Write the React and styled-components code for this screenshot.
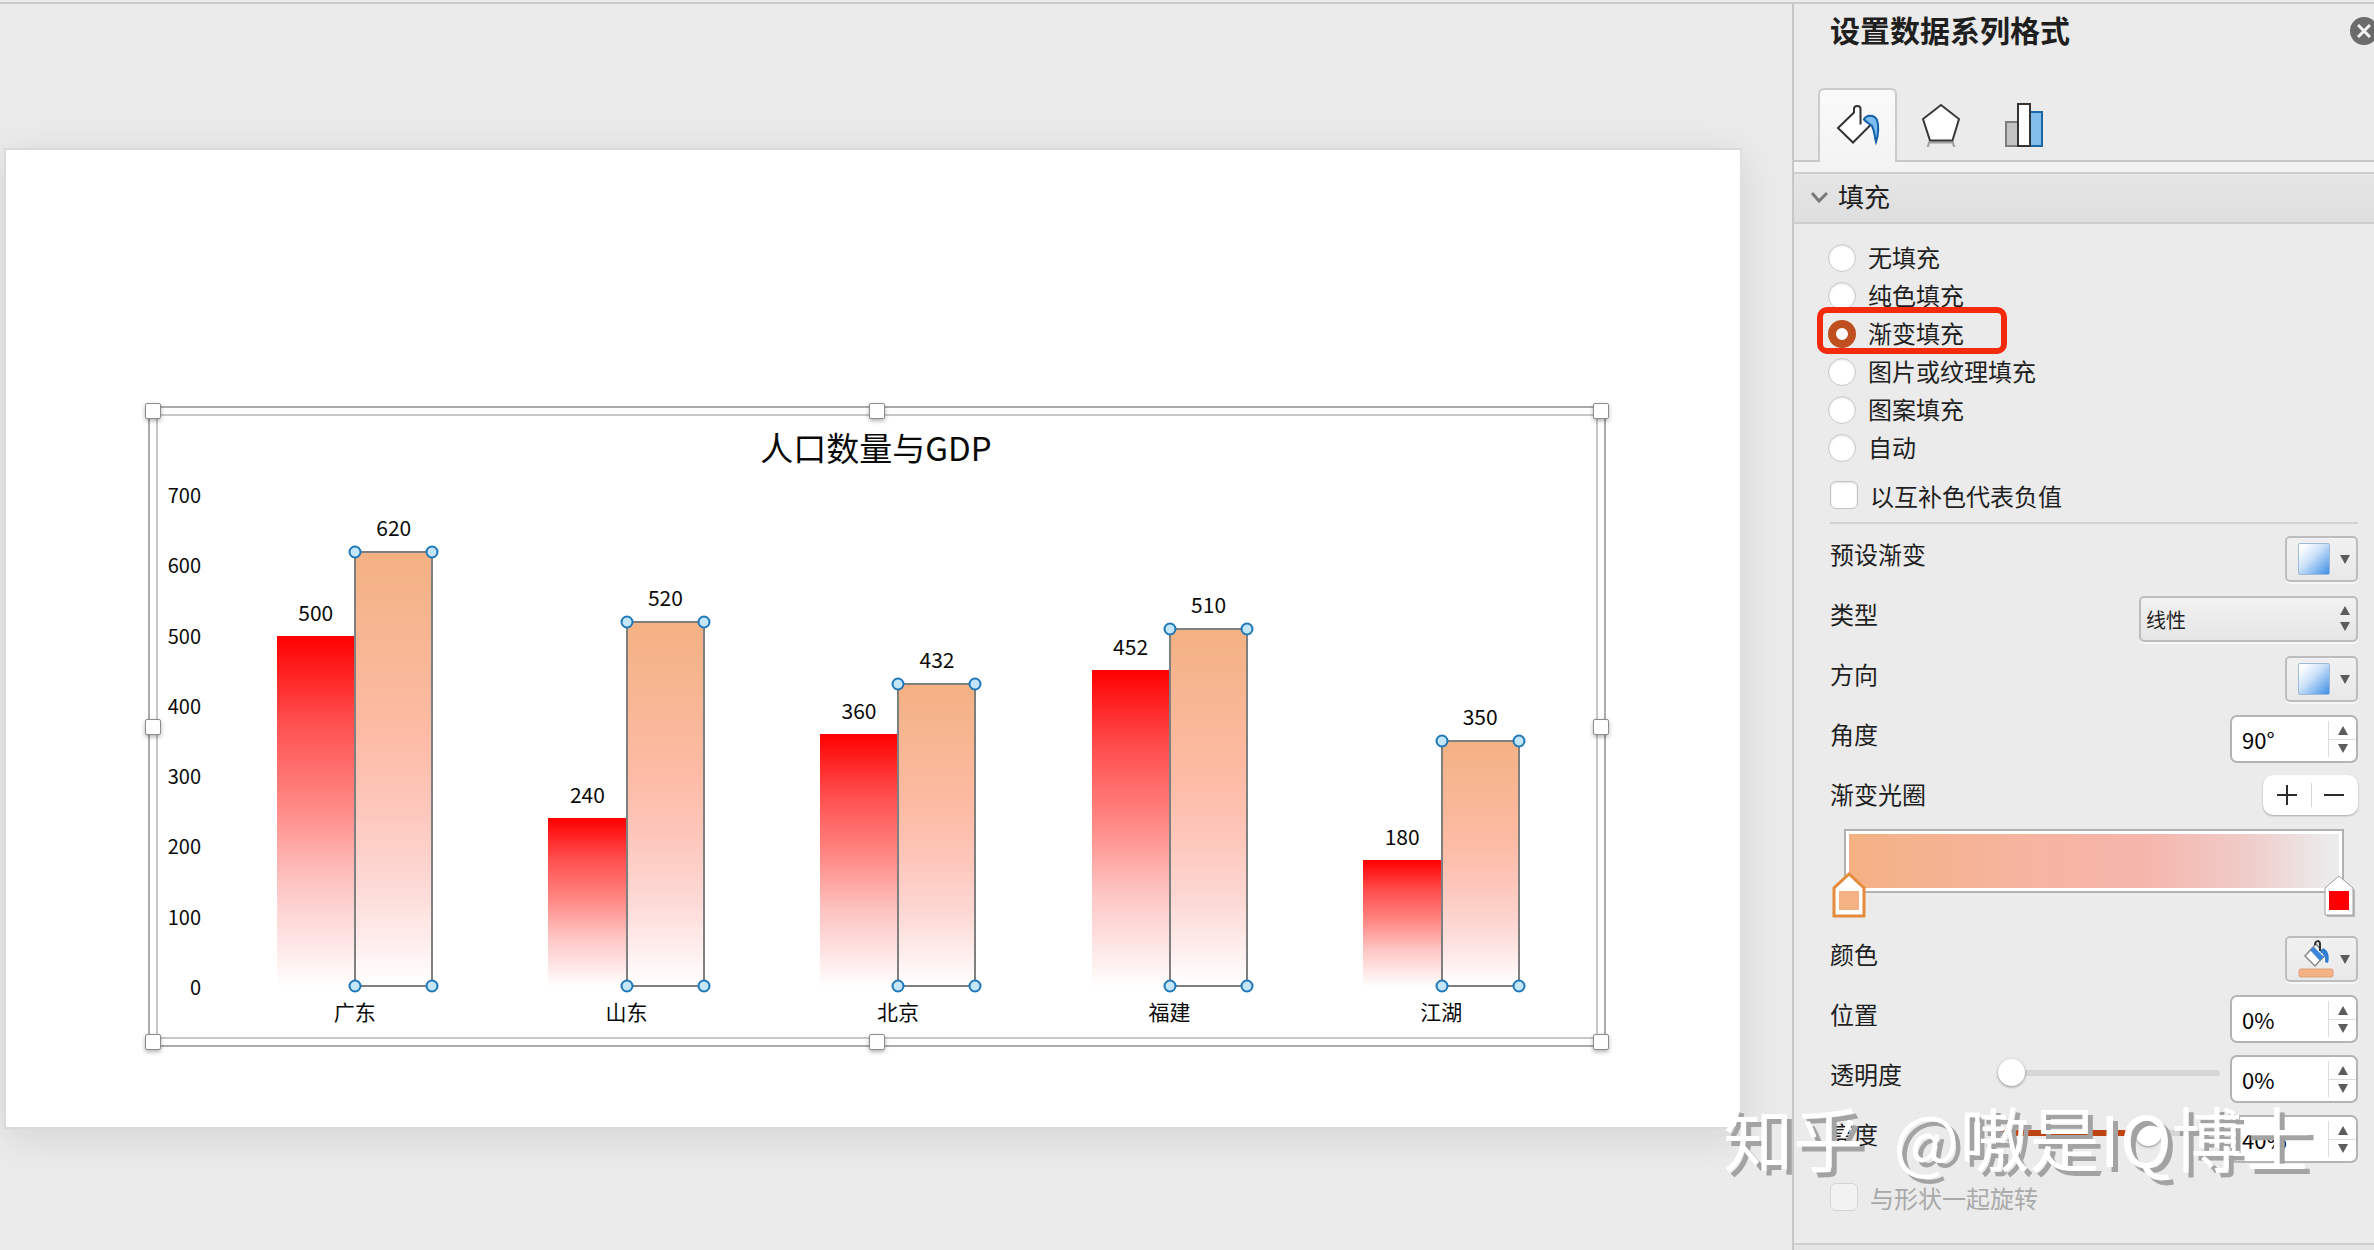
import React, { useState } from "react";
import styled, { createGlobalStyle } from "styled-components";

const UNIT = 0.7;

const GlobalStyle = createGlobalStyle`
  *, *::before, *::after { box-sizing: border-box; }
  body {
    margin: 0;
    background: #ebebeb;
    color: #1f1f1f;
    font-family: "Noto Sans CJK SC", "Noto Sans", sans-serif;
    font-size: 24px;
  }
  button, input, select { font: inherit; color: inherit; margin: 0; }
`;

const Page = styled.div`
  display: flex;
  flex-direction: column;
  min-height: 100vh;
  position: relative;
  overflow: hidden;
`;

const TopRule = styled.div`
  height: 4px;
  border-bottom: 2px solid #cacaca;
`;

const Workspace = styled.div`
  display: flex;
  flex: 1;
`;

const Stage = styled.main`
  flex: 1;
  min-width: 0;
  padding: 144px 50px 0 4px;
  background: #ebebeb;
`;

const Slide = styled.section`
  border: 2px solid #dadada;
  border-right-color: #e0e0e0;
  background: #fff;
  padding: 256px 134px 80px 142px;
  box-shadow: 0 8px 40px rgba(0, 0, 0, 0.1);
`;

const ChartFrame = styled.figure`
  position: relative;
  margin: 0;
  padding: 6px;
  border: 2px solid #ababab;
`;

const ChartInner = styled.div`
  border: 2px solid #c8c8c8;
  padding: 7px 19px 12px 0;
  color: #0a0a0a;
`;

const FrameHandle = styled.span`
  position: absolute;
  left: ${(p) => p.$x};
  top: ${(p) => p.$y};
  width: 16px;
  height: 16px;
  transform: translate(-50%, -50%);
  border: 1px solid #8c8c8c;
  border-radius: 2px;
  background: #fff;
  box-shadow: 0 2px 4px rgba(0, 0, 0, 0.3);
`;

const HandleLayer = styled.div`
  position: absolute;
  inset: 3px;
`;

const ChartTitle = styled.figcaption`
  font-size: 33px;
  line-height: 48px;
  text-align: center;
  padding-left: 17px;
`;

const ChartBody = styled.div`
  display: flex;
  gap: 18px;
  padding-top: 11px;
`;

const Axis = styled.div`
  display: flex;
  flex-direction: column;
  justify-content: space-between;
  width: 43px;
  height: 518px;
  font-size: 20px;
  line-height: 26px;
  text-align: right;
`;

const Plot = styled.div`
  flex: 1;
  display: grid;
  grid-template-columns: repeat(5, 1fr);
`;

const Category = styled.div`
  display: flex;
  flex-direction: column;
  align-items: center;
  gap: 10px;
  font-size: 21px;
  line-height: 28px;
`;

const BarPair = styled.div`
  display: flex;
  align-items: flex-end;
  height: 505px;
`;

const BarColumn = styled.div`
  width: 78px;
  display: flex;
  flex-direction: column;
  align-items: center;
  gap: 10px;
  font-size: 21px;
  line-height: 28px;
`;

const RedBar = styled.div`
  width: 100%;
  background: linear-gradient(#ff0000, #ff5050 25%, #ff8a86 49%, #fdc4c2 70%, #fff 100%);
`;

const OrangeBar = styled.div`
  position: relative;
  width: 79px;
  border: 2px solid #7f7f7f;
  background: linear-gradient(#f4b183, #fdbba5 42%, #fdc6ba 58%, #fdd8d4 76%, #feeeed 90%, #fff 100%);
`;

const Dot = styled.span`
  position: absolute;
  left: ${(p) => p.$x};
  top: ${(p) => p.$y};
  width: 13px;
  height: 13px;
  transform: translate(-50%, -50%);
  border: 2px solid #1f77b8;
  border-radius: 50%;
  background: #c4e6fa;
`;

const DotLayer = styled.div`
  position: absolute;
  inset: -1px;
`;

const Panel = styled.aside`
  width: 582px;
  display: flex;
  flex-direction: column;
  border-left: 2px solid #c8c8c8;
  background: #ebebeb;
`;

const PanelHeader = styled.header`
  display: flex;
  justify-content: space-between;
  align-items: center;
  height: 54px;
  padding-left: 36px;
  overflow: hidden;
`;

const PanelTitle = styled.h1`
  margin: 0;
  padding-bottom: 4px;
  font-size: 30px;
  line-height: 50px;
  font-weight: 700;
`;

const CloseButton = styled.button`
  width: 28px;
  height: 28px;
  margin-right: -4px;
  padding: 0;
  border: 0;
  border-radius: 50%;
  background: #6b6b6b;
  display: grid;
  place-items: center;
`;

const TabList = styled.div`
  display: flex;
  gap: 4px;
  height: 74px;
  margin-top: 30px;
  padding-left: 24px;
  border-bottom: 2px solid #c8c8c8;
`;

const Tab = styled.button`
  width: 79px;
  height: 74px;
  padding: 0 0 2px;
  display: grid;
  place-items: center;
  border: 2px solid ${(p) => (p.$active ? "#cbcbcb" : "transparent")};
  border-bottom: 0;
  border-radius: 6px 6px 0 0;
  background: ${(p) => (p.$active ? "linear-gradient(#fafafa, #f3f3f3)" : "transparent")};
`;

const SectionHeader = styled.button`
  display: flex;
  align-items: center;
  gap: 10px;
  height: 52px;
  margin-top: 10px;
  padding: 0 17px 2px;
  border: 0;
  border-top: 2px solid #cdcdcd;
  border-bottom: 2px solid #cdcdcd;
  background: linear-gradient(#e6e6e6, #dedede);
  box-shadow: 0 -10px 0 #f3f3f3;
  font-size: 26px;
  text-align: left;
`;

const SectionName = styled.span`
  padding-bottom: 3px;
`;

const FillForm = styled.form`
  padding: 15px 16px 0 36px;
`;

const RadioGroup = styled.fieldset`
  margin: 0;
  padding: 0;
  border: 0;
`;

const Choice = styled.label`
  position: relative;
  display: flex;
  align-items: center;
  width: max-content;
  height: 38px;
  gap: 12px;
  margin-left: -2px;
`;

const ChoiceText = styled.span`
  padding-bottom: 3px;
`;

const Radio = styled.input`
  appearance: none;
  width: 28px;
  height: 28px;
  border: 1px solid #c9c9c9;
  border-radius: 50%;
  background: #fff;
  box-shadow: inset 0 1px 2px rgba(0, 0, 0, 0.12);
  &:checked {
    border: 8px solid #c05020;
    box-shadow: none;
  }
`;

const Highlight = styled.span`
  position: absolute;
  inset: -8px -43px -1px -11px;
  border: 6px solid #f42a0c;
  border-radius: 10px;
  pointer-events: none;
`;

const CheckRow = styled.label`
  display: flex;
  align-items: center;
  gap: 12px;
  height: 40px;
  margin-top: 8px;
  color: ${(p) => (p.$muted ? "#a9a9a9" : "inherit")};
`;

const Checkbox = styled.input`
  appearance: none;
  width: 28px;
  height: 28px;
  border: 1px solid #c4c4c4;
  border-radius: 6px;
  background: #fff;
  box-shadow: inset 0 1px 2px rgba(0, 0, 0, 0.12);
  &:disabled {
    border-color: #d4d4d4;
    background: #f2f2f2;
    box-shadow: none;
  }
`;

const Divider = styled.hr`
  height: 2px;
  margin: 7px 0 5px;
  border: 0;
  background: #d2d2d2;
`;

const Row = styled.div`
  display: flex;
  align-items: center;
  gap: 10px;
  height: 60px;
`;

const RowLabel = styled.label`
  flex: 1;
  padding-bottom: 10px;
  line-height: 36px;
`;

const MenuButton = styled.button`
  display: flex;
  align-items: center;
  justify-content: space-between;
  width: 73px;
  height: 46px;
  padding: 0 6px 0 11px;
  border: 2px solid #bdbdbd;
  border-radius: 5px;
  background: linear-gradient(#f1f1f1, #e9e9e9);
  box-shadow: 0 2px 0 #f8f8f8;
`;

const Swatch = styled.span`
  width: 32px;
  height: 32px;
  border: 1px solid #9fb9d6;
  border-radius: 2px;
  background: linear-gradient(135deg, #ffffff 10%, #c9e0f8 45%, #3f8fe6 100%);
`;

const SelectBox = styled.div`
  display: flex;
  position: relative;
  width: 219px;
`;

const Select = styled.select`
  appearance: none;
  width: 100%;
  height: 46px;
  padding: 0 30px 0 5px;
  border: 2px solid #bdbdbd;
  border-radius: 5px;
  background: linear-gradient(#f2f2f2, #e6e6e6);
  box-shadow: 0 2px 0 #f8f8f8;
  font-size: 20px;
`;

const SelectArrows = styled.span`
  position: absolute;
  right: 8px;
  top: 10px;
  display: grid;
  gap: 7px;
  line-height: 0;
  pointer-events: none;
`;

const SpinBox = styled.div`
  display: flex;
  width: 128px;
  height: 48px;
  border: 2px solid #b4b4b4;
  border-radius: 7px;
  background: #fff;
`;

const SpinInput = styled.input`
  flex: 1;
  min-width: 0;
  padding: 0 0 0 10px;
  border: 0;
  background: transparent;
  color: #000;
  font-size: 22px;
  outline: 0;
`;

const SpinButtons = styled.div`
  display: grid;
  grid-template-rows: 1fr 1fr;
  width: 28px;
  margin: 4px 0;
  border-left: 1px solid #dcdcdc;
`;

const SpinButton = styled.button`
  display: grid;
  place-items: center;
  padding: 0;
  border: 0;
  background: none;
  & + & {
    border-top: 1px solid #dcdcdc;
  }
`;

const StopButtons = styled.div`
  display: flex;
  width: 95px;
  height: 40px;
  margin-bottom: 8px;
  border-radius: 10px;
  background: #fff;
  box-shadow: 0 1px 2px rgba(0, 0, 0, 0.3);
`;

const StopButton = styled.button`
  position: relative;
  flex: 1;
  display: grid;
  place-items: center;
  padding: 0;
  border: 0;
  background: none;
  & + &::before {
    content: "";
    position: absolute;
    left: 0;
    top: 8px;
    bottom: 8px;
    width: 1px;
    background: #d6d6d6;
  }
`;

const GradientEditor = styled.div`
  position: relative;
  height: 100px;
  padding: 0 14px;
`;

const GradientTrack = styled.div`
  height: 64px;
  border: 2px solid #b1b1b1;
  padding: 3px;
  background:
    linear-gradient(90deg, #f4b183, #f6b4a0 36%, #f5b5ab 60%, #f0cac7 80%, #ebebeb 98%) content-box,
    #fff;
`;

const StopMarker = styled.button`
  position: absolute;
  top: 43px;
  ${(p) => (p.$end ? "right: 2px;" : "left: 2px;")}
  width: 34px;
  height: 46px;
  padding: 0;
  border: 0;
  background: none;
`;

const Slider = styled.input`
  appearance: none;
  width: 222px;
  height: 28px;
  margin-bottom: 12px;
  background: none;
  &::-webkit-slider-runnable-track {
    height: 6px;
    border-radius: 3px;
    background: linear-gradient(90deg, #bf4413 ${(p) => p.$fill}%, #d6d6d6 ${(p) => p.$fill}%);
  }
  &::-webkit-slider-thumb {
    appearance: none;
    width: 27px;
    height: 27px;
    margin-top: -11px;
    border: 0;
    border-radius: 50%;
    background: #fff;
    box-shadow: 0 1px 3px rgba(0, 0, 0, 0.4);
  }
`;

const NextSection = styled.div`
  flex: 1;
  min-height: 8px;
  margin-top: 26px;
  border-top: 2px solid #cdcdcd;
  background: #e5e5e5;
`;

const Watermark = styled.div`
  position: absolute;
  right: 62px;
  bottom: 64px;
  display: flex;
  gap: 30px;
  color: #fff;
  font-size: 70px;
  line-height: 100px;
  white-space: nowrap;
  text-shadow: 5px 5px 0 #a3a3a3;
  pointer-events: none;
`;

const data = [
  { name: "广东", a: 500, b: 620 },
  { name: "山东", a: 240, b: 520 },
  { name: "北京", a: 360, b: 432 },
  { name: "福建", a: 452, b: 510 },
  { name: "江湖", a: 180, b: 350 },
];

const ticks = [700, 600, 500, 400, 300, 200, 100, 0];

const fillModes = ["无填充", "纯色填充", "渐变填充", "图片或纹理填充", "图案填充", "自动"];

const corners = [
  ["0%", "0%"],
  ["100%", "0%"],
  ["0%", "100%"],
  ["100%", "100%"],
];

const edges = [
  ["50%", "0%"],
  ["0%", "50%"],
  ["100%", "50%"],
  ["50%", "100%"],
];

function Triangle({ up }) {
  return (
    <svg width="10" height="9" viewBox="0 0 10 9" aria-hidden="true">
      <path d={up ? "M5 0 10 9H0Z" : "M0 0H10L5 9Z"} fill="#5c5c5c" />
    </svg>
  );
}

function BucketIcon() {
  return (
    <svg width="44" height="44" viewBox="0 0 44 44" aria-hidden="true">
      <path
        d="M17.500 9.500 2 25 17 39.500 35 21.500 24 19V5.500C24 1 17.500 1 17.500 5.500Z"
        fill="#fff"
        stroke="none"
      />
      <path
        d="M24.500 21.500V6C24.500 2 18 2 18 6V9.500L2 25 17 39.500 35 21.500"
        fill="none"
        stroke="#333"
        strokeWidth="2"
      />
      <path
        d="M28 16.500C30 12 38 11 41 17 43 22 42.500 32 40 39 38.500 33 38.500 28 36 23 34 21 31 20 28 16.500Z"
        fill="#7dbdf0"
        stroke="#1560a8"
        strokeWidth="2"
      />
    </svg>
  );
}

function PentagonIcon() {
  return (
    <svg width="44" height="44" viewBox="0 0 44 44" aria-hidden="true">
      <path d="M10 38.500Q10 42 8.500 44M34 38.500Q34 42 35.500 44M10 39.500H34" fill="none" stroke="#a0a0a0" strokeWidth="2" />
      <path d="M22 2 40 16 33.500 37.500H11L4 16Z" fill="#fff" stroke="#383838" strokeWidth="2" />
    </svg>
  );
}

function ColumnsIcon() {
  return (
    <svg width="44" height="44" viewBox="0 0 44 44" aria-hidden="true">
      <rect x="4" y="19" width="12" height="24" fill="#c3c3c3" stroke="#7d7d7d" strokeWidth="2" />
      <rect x="28" y="9" width="12" height="34" fill="#83bdec" stroke="#1d66a8" strokeWidth="2" />
      <rect x="16" y="1" width="12" height="42" fill="#fff" stroke="#333" strokeWidth="2" />
    </svg>
  );
}

function ColorIcon() {
  return (
    <svg width="36" height="40" viewBox="0 0 36 40" aria-hidden="true">
      <path d="M18 5 27 16 17 27 7 17Z" fill="#fff" stroke="#8a8a8a" strokeWidth="1.500" />
      <path d="M12 11 22 22 26 18 16 8Z" fill="#3b86d6" />
      <path d="M25 9C30 11 32 17 30 24L27 23C28 19 26 15 22 13Z" fill="#2f7dd1" />
      <path d="M17 6C17 1 22 1 22 5V12" fill="none" stroke="#333" strokeWidth="2" />
      <rect x="1" y="30" width="34" height="8" rx="2" fill="#f4b183" stroke="#dda079" />
    </svg>
  );
}

function StopShape({ color, selected }) {
  return (
    <svg width="34" height="46" viewBox="0 0 34 46" aria-hidden="true">
      {selected ? (
        <path d="M17 2 32 16V44H2V16Z" fill="#fff" stroke="#e68a3c" strokeWidth="3" />
      ) : (
        <>
          <path d="M18 6 33 18V45H5V18Z" fill="#b8b8b8" />
          <path d="M17 4 31 16V43H3V16Z" fill="#fff" stroke="#a0a0a0" strokeWidth="1" />
        </>
      )}
      <rect x="7" y="19" width="20" height="19" fill={color} />
    </svg>
  );
}

function Spin({ id, value, label }) {
  return (
    <SpinBox>
      <SpinInput id={id} aria-label={label} defaultValue={value} />
      <SpinButtons>
        <SpinButton type="button" aria-label={label + " +"}>
          <Triangle up />
        </SpinButton>
        <SpinButton type="button" aria-label={label + " -"}>
          <Triangle />
        </SpinButton>
      </SpinButtons>
    </SpinBox>
  );
}

function Chart() {
  return (
    <ChartFrame>
      <ChartInner>
        <ChartTitle>人口数量与GDP</ChartTitle>
        <ChartBody>
          <Axis>
            {ticks.map((t) => (
              <span key={t}>{t}</span>
            ))}
          </Axis>
          <Plot>
            {data.map((d) => (
              <Category key={d.name}>
                <BarPair>
                  <BarColumn>
                    <span>{d.a}</span>
                    <RedBar style={{ height: d.a * UNIT + 1 }} />
                  </BarColumn>
                  <BarColumn>
                    <span>{d.b}</span>
                    <OrangeBar style={{ height: d.b * UNIT + 2 }}>
                      <DotLayer>
                        {corners.map(([x, y]) => (
                          <Dot key={x + y} $x={x} $y={y} />
                        ))}
                      </DotLayer>
                    </OrangeBar>
                  </BarColumn>
                </BarPair>
                <span>{d.name}</span>
              </Category>
            ))}
          </Plot>
        </ChartBody>
      </ChartInner>
      <HandleLayer>
        {[...corners, ...edges].map(([x, y]) => (
          <FrameHandle key={x + y} $x={x} $y={y} />
        ))}
      </HandleLayer>
    </ChartFrame>
  );
}

export default function App() {
  const [mode, setMode] = useState("渐变填充");
  return (
    <Page>
      <GlobalStyle />
      <TopRule />
      <Workspace>
        <Stage>
          <Slide>
            <Chart />
          </Slide>
        </Stage>
        <Panel>
          <PanelHeader>
            <PanelTitle>设置数据系列格式</PanelTitle>
            <CloseButton type="button" aria-label="关闭">
              <svg width="14" height="14" viewBox="0 0 14 14" aria-hidden="true">
                <path d="M1 1 13 13M13 1 1 13" stroke="#f2f2f2" strokeWidth="3" />
              </svg>
            </CloseButton>
          </PanelHeader>
          <TabList role="tablist">
            <Tab type="button" role="tab" aria-selected="true" aria-label="填充与线条" $active>
              <BucketIcon />
            </Tab>
            <Tab type="button" role="tab" aria-selected="false" aria-label="效果">
              <PentagonIcon />
            </Tab>
            <Tab type="button" role="tab" aria-selected="false" aria-label="系列选项">
              <ColumnsIcon />
            </Tab>
          </TabList>
          <SectionHeader type="button">
            <svg width="17" height="12" viewBox="0 0 17 12" aria-hidden="true">
              <path d="M1 2 8 10 16 2" fill="none" stroke="#7a7a7a" strokeWidth="3" />
            </svg>
            <SectionName>填充</SectionName>
          </SectionHeader>
          <FillForm onSubmit={(e) => e.preventDefault()}>
            <RadioGroup aria-label="填充">
              {fillModes.map((m) => (
                <Choice key={m}>
                  <Radio type="radio" name="fill" checked={mode === m} onChange={() => setMode(m)} />
                  <ChoiceText>{m}</ChoiceText>
                  {m === "渐变填充" && <Highlight />}
                </Choice>
              ))}
            </RadioGroup>
            <CheckRow>
              <Checkbox type="checkbox" />
              以互补色代表负值
            </CheckRow>
            <Divider />
            <Row>
              <RowLabel htmlFor="preset">预设渐变</RowLabel>
              <MenuButton id="preset" type="button">
                <Swatch />
                <Triangle />
              </MenuButton>
            </Row>
            <Row>
              <RowLabel htmlFor="kind">类型</RowLabel>
              <SelectBox>
                <Select id="kind" defaultValue="线性">
                  <option>线性</option>
                </Select>
                <SelectArrows>
                  <Triangle up />
                  <Triangle />
                </SelectArrows>
              </SelectBox>
            </Row>
            <Row>
              <RowLabel htmlFor="direction">方向</RowLabel>
              <MenuButton id="direction" type="button">
                <Swatch />
                <Triangle />
              </MenuButton>
            </Row>
            <Row>
              <RowLabel htmlFor="angle">角度</RowLabel>
              <Spin id="angle" label="角度" value="90°" />
            </Row>
            <Row>
              <RowLabel as="span">渐变光圈</RowLabel>
              <StopButtons>
                <StopButton type="button" aria-label="添加">
                  <svg width="22" height="22" viewBox="0 0 22 22" aria-hidden="true">
                    <path d="M11 1V21M1 11H21" stroke="#2b2b2b" strokeWidth="2" />
                  </svg>
                </StopButton>
                <StopButton type="button" aria-label="删除">
                  <svg width="22" height="22" viewBox="0 0 22 22" aria-hidden="true">
                    <path d="M1 11H21" stroke="#2b2b2b" strokeWidth="2" />
                  </svg>
                </StopButton>
              </StopButtons>
            </Row>
            <GradientEditor>
              <GradientTrack />
              <StopMarker type="button" aria-label="光圈 1">
                <StopShape color="#f4b183" selected />
              </StopMarker>
              <StopMarker type="button" aria-label="光圈 2" $end>
                <StopShape color="#ff0000" />
              </StopMarker>
            </GradientEditor>
            <Row>
              <RowLabel htmlFor="color">颜色</RowLabel>
              <MenuButton id="color" type="button">
                <ColorIcon />
                <Triangle />
              </MenuButton>
            </Row>
            <Row>
              <RowLabel htmlFor="position">位置</RowLabel>
              <Spin id="position" label="位置" value="0%" />
            </Row>
            <Row>
              <RowLabel htmlFor="alpha">透明度</RowLabel>
              <Slider type="range" aria-label="透明度" min="0" max="100" defaultValue="0" $fill={0} />
              <Spin id="alpha" label="透明度" value="0%" />
            </Row>
            <Row>
              <RowLabel htmlFor="light">亮度</RowLabel>
              <Slider type="range" aria-label="亮度" min="-100" max="100" defaultValue="40" $fill={66} />
              <Spin id="light" label="亮度" value="40%" />
            </Row>
            <CheckRow $muted>
              <Checkbox type="checkbox" disabled />
              与形状一起旋转
            </CheckRow>
          </FillForm>
          <NextSection />
        </Panel>
      </Workspace>
      <Watermark>
        <span>知乎</span>
        <span>@嗷是IQ博士</span>
      </Watermark>
    </Page>
  );
}
